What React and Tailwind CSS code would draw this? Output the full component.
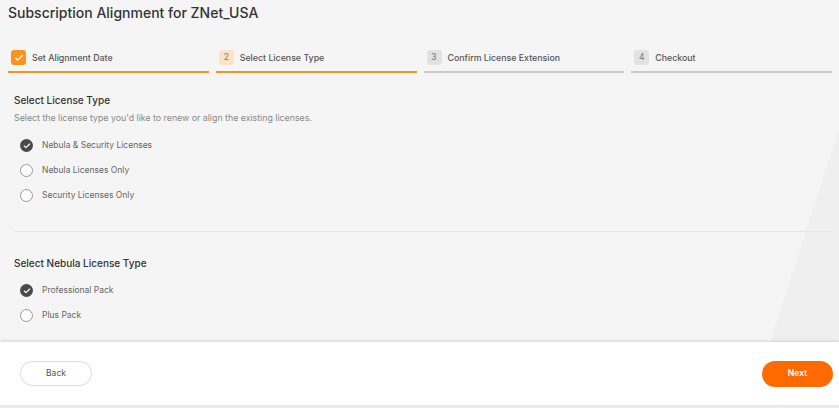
import { Check } from 'lucide-react';

const steps = [
  { n: 1, label: 'Set Alignment Date', state: 'done' },
  { n: 2, label: 'Select License Type', state: 'active' },
  { n: 3, label: 'Confirm License Extension', state: 'todo' },
  { n: 4, label: 'Checkout', state: 'todo' },
];

const Radio = ({ checked, label }) => (
  <div className="flex items-center h-[25px]">
    {checked ? (
      <div className="w-[13px] h-[13px] rounded-full bg-[#4a4a4a] flex items-center justify-center ml-[20px]">
        <Check size={8} strokeWidth={3.5} className="text-white" />
      </div>
    ) : (
      <div className="w-[13px] h-[13px] rounded-full border border-[#9a9a9a] bg-white ml-[20px]"></div>
    )}
    <span className="ml-[9px] text-[8.5px] text-[#666]">{label}</span>
  </div>
);

export default function App() {
  return (
    <div
      className="h-[408px] w-[839px] flex flex-col bg-[#f5f5f5] relative overflow-hidden"
      style={{ fontFamily: 'Inter, "Noto Sans", sans-serif' }}
    >
      {/* 右侧斜线背景 */}
      <svg className="absolute top-0 left-0 pointer-events-none" width="839" height="408">
        <polygon points="842,120 842,342 770,342" fill="#efefef" />
      </svg>

      <div className="relative flex-1">
        <h1 className="px-2 pt-[3px] text-[14px] leading-[20px] text-[#333] font-medium">
          Subscription Alignment for ZNet_USA
        </h1>

        {/* 步骤条 */}
        <div className="flex gap-[7px] pl-2 pr-[7px] mt-[27px]">
          {steps.map((s) => (
            <div
              key={s.n}
              className={`flex-1 flex items-center gap-[6px] pl-[3px] pb-[6px] border-b-2 ${
                s.state === 'todo' ? 'border-[#c9c9c9]' : 'border-[#f7931e]'
              }`}
            >
              {s.state === 'done' ? (
                <div className="w-[15px] h-[15px] rounded-[3px] bg-[#f7931e] flex items-center justify-center">
                  <Check size={10} strokeWidth={3} className="text-white" />
                </div>
              ) : (
                <div
                  className={`w-[15px] h-[15px] rounded-[3px] flex items-center justify-center text-[8.5px] text-[#777] ${
                    s.state === 'active' ? 'bg-[#fde3c6]' : 'bg-[#e2e2e2]'
                  }`}
                >
                  {s.n}
                </div>
              )}
              <span className="text-[8.8px] text-[#555] font-medium">{s.label}</span>
            </div>
          ))}
        </div>

        {/* 授权类型 */}
        <div className="px-[14px] mt-[20px]">
          <h2 className="text-[10px] text-[#333] font-medium leading-[14px]">Select License Type</h2>
          <p className="text-[8.8px] text-[#888] mt-[4px]">
            Select the license type you'd like to renew or align the existing licenses.
          </p>
        </div>
        <div className="mt-[9px]">
          <Radio checked label="Nebula & Security Licenses" />
          <Radio label="Nebula Licenses Only" />
          <Radio label="Security Licenses Only" />
        </div>

        <div className="ml-[14px] mr-[7px] mt-[23px] border-t border-[#e6e6e6]"></div>

        <div className="px-[14px] mt-[24px]">
          <h2 className="text-[10px] text-[#333] font-medium leading-[14px]">Select Nebula License Type</h2>
        </div>
        <div className="mt-[8px]">
          <Radio checked label="Professional Pack" />
          <Radio label="Plus Pack" />
        </div>
      </div>

      {/* 底部按钮 */}
      <div className="relative h-[63px] bg-white shadow-[0_-1px_3px_rgba(0,0,0,0.12)] flex items-center justify-between pl-[20px] pr-[6px] shrink-0">
        <button className="w-[72px] h-[25px] rounded-full border border-[#dcdcdc] bg-white text-[8.5px] text-[#555]">
          Back
        </button>
        <button className="w-[71px] h-[26px] rounded-full bg-[#ff6a00] text-[8.5px] font-semibold text-white">
          Next
        </button>
      </div>
      <div className="h-[3px] bg-[#ececec] shrink-0"></div>
    </div>
  );
}
